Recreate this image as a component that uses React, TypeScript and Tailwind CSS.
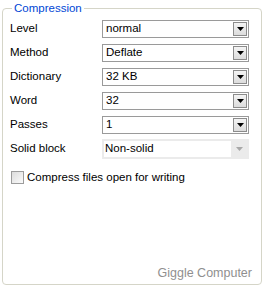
import React from 'react';

const rows = [
  { label: 'Level', value: 'normal' },
  { label: 'Method', value: 'Deflate' },
  { label: 'Dictionary', value: '32 KB' },
  { label: 'Word', value: '32' },
  { label: 'Passes', value: '1' },
];

function Arrow({ disabled }: { disabled?: boolean }) {
  return (
    <svg width="7" height="4" viewBox="0 0 7 4">
      <path d="M0 0h7L3.5 4z" fill={disabled ? '#a8a8a8' : '#000'} />
    </svg>
  );
}

function Combo({ value }: { value: string }) {
  return (
    <div className="flex h-[18px] w-[147px] items-center border border-[#9a9a9a] bg-white p-[1px]">
      <span className="flex-1 pl-[2px] leading-none">{value}</span>
      <div className="flex h-[14px] w-[14px] items-center justify-center border border-[#8c8c8c] bg-gradient-to-b from-[#f4f4f4] to-[#dcdcdc]">
        <Arrow />
      </div>
    </div>
  );
}

function DisabledCombo({ value }: { value: string }) {
  return (
    <div className="flex h-[20px] w-[147px] items-center border-2 border-[#ebebeb] bg-white">
      <span className="flex-1 pl-[1px] leading-none">{value}</span>
      <div className="flex h-full w-[16px] items-center justify-center bg-[#ebebeb]">
        <Arrow disabled />
      </div>
    </div>
  );
}

export default function App() {
  return (
    <div className="h-[286px] w-[264px] bg-white pt-[1px] font-['Liberation_Sans',Arial,sans-serif] text-[11.5px] text-black">
      <fieldset className="mx-[2px] flex h-[284px] flex-col rounded-[4px] border border-[#d5d5c8] px-[6px]">
        <legend className="ml-[3px] px-[2px] text-[11.5px] leading-[14px] text-[#0046d5]">Compression</legend>
        <div className="mt-[5px] flex flex-col gap-[6px]">
          {rows.map((r) => (
            <div key={r.label} className="flex h-[18px] items-center">
              <span className="w-[93px] pl-[1px]">{r.label}</span>
              <Combo value={r.value} />
            </div>
          ))}
          <div className="-mt-[1px] flex h-[20px] items-center">
            <span className="w-[93px] pl-[1px]">Solid block</span>
            <DisabledCombo value="Non-solid" />
          </div>
        </div>
        <label className="mt-[10px] flex items-center gap-[3px] pl-[2px]">
          <span className="h-[13px] w-[13px] border border-[#9c9c9c] bg-gradient-to-br from-[#dcdcdc] to-[#fbfbfb]" />
          <span>Compress files open for writing</span>
        </label>
        <div className="mt-auto mb-[1px] flex justify-end pr-[3px] text-[12.5px] text-[#8f8f8f]">
          Giggle Computer
        </div>
      </fieldset>
    </div>
  );
}
